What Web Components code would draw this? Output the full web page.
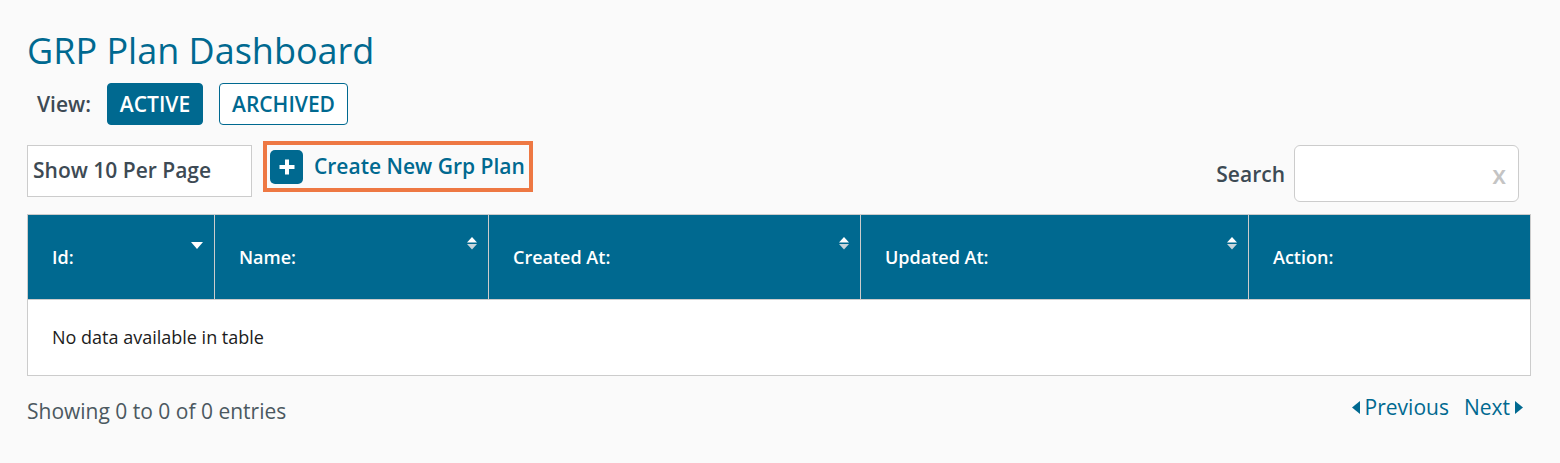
<!DOCTYPE html>
<html><head><meta charset="utf-8"><title>GRP Plan Dashboard</title>
<style>
html,body{margin:0;padding:0;background:#fafafa;}
body{font-family:"Open Sans",sans-serif;color:#3d4a54;}
</style></head><body>
<grp-dashboard>
  <span slot="title">GRP Plan Dashboard</span>
</grp-dashboard>
<script>
function def(name, html){
  customElements.define(name, class extends HTMLElement{
    constructor(){super();this.attachShadow({mode:'open'}).innerHTML=html;}
  });
}
def('view-switch',`<style>
:host{display:flex;align-items:center;height:42px;margin-top:0;padding-left:10px;font-size:21px;font-weight:600;color:#3d4a54}
.l{width:70px}
.b{box-sizing:border-box;height:42px;display:flex;align-items:center;justify-content:center;border:1px solid #006990;border-radius:4px;color:#006990;background:#fff;font-size:21px;font-weight:600}
.a{width:96px;background:#006990;color:#fff}
.r{width:129px;margin-left:16px}
</style><span class="l">View:</span><span class="b a">ACTIVE</span><span class="b r">ARCHIVED</span>`);
def('length-select',`<style>
:host{box-sizing:border-box;display:flex;align-items:center;width:225px;height:52px;background:#fff;border:1px solid #ccc;padding-left:5px;font-size:21px;font-weight:600;color:#3d4a54}
span{position:relative;top:-1px}
</style><span><slot></slot></span>`);
def('create-button',`<style>
:host{box-sizing:border-box;display:flex;align-items:center;width:270px;height:51px;border:4px solid #ee7843;margin-left:11px;margin-top:-4px;padding-left:3px;font-size:21px;font-weight:600;color:#006990;white-space:nowrap}
.i{width:33px;height:34px;border-radius:5px;background:#006990;display:flex;align-items:center;justify-content:center;margin-right:11px;flex:none}
span.t{position:relative;top:-1px}
</style><span class="i"><svg width="16" height="16" viewBox="0 0 16 16"><path d="M6 0.5h4v5.500h5.500v4h-5.500v5.500h-4v-5.500h-5.500v-4h5.500z" fill="#fff"/></svg></span><span class="t"><slot></slot></span>`);
def('search-box',`<style>
:host{display:flex;align-items:center;margin-left:auto;margin-right:12px;font-size:21px;font-weight:600;color:#3d4a54}
.f{box-sizing:border-box;width:225px;height:57px;margin-left:9px;background:#fff;border:1px solid #ccc;border-radius:6px;display:flex;align-items:center;justify-content:flex-end;padding-right:12px;color:#c4c4c4;font-size:25px;font-weight:600}
</style><slot></slot><span class="f">x</span>`);
def('sort-icon',`<style>
:host{display:block;position:absolute;right:11px;top:22px;width:10px;height:13px}
svg{display:block}
</style><svg width="10" height="13" viewBox="0 0 10 13"><path d="M5 0L10 5.500H0z" fill="#fff"/><path d="M5 12.500L0 7H10z" fill="#c8d4da"/></svg>`);
def('sort-down',`<style>
:host{display:block;position:absolute;right:11px;top:27px;width:12px;height:7px}
svg{display:block}
</style><svg width="12" height="7" viewBox="0 0 12 7"><path d="M0 0H12L6 7z" fill="#fff"/></svg>`);
def('data-table',`<style>
:host{display:block;box-sizing:border-box;margin-top:12px;width:1504px;border:1px solid #ccc;background:#fff}
.h{display:grid;grid-template-columns:186px 274px 372px 388px 1fr;height:84px;background:#006990;color:#fff;font-size:18px;font-weight:600;border-bottom:1px solid #ccc;box-sizing:content-box}
.c{position:relative;display:flex;align-items:center;padding-left:24px;border-left:1px solid #ccc;box-sizing:border-box}
.c:first-child{border-left:0}
.c+.c{padding-left:24px}
.e{height:75px;display:flex;align-items:center;padding-left:24px;font-size:18px;color:#1c1c1c}
span.x{position:relative;top:-1px}
</style><div class="h">
<div class="c">Id:<sort-down></sort-down></div>
<div class="c">Name:<sort-icon></sort-icon></div>
<div class="c">Created At:<sort-icon></sort-icon></div>
<div class="c">Updated At:<sort-icon></sort-icon></div>
<div class="c">Action:</div>
</div><div class="e"><span class="x">No data available in table</span></div>`);
def('page-footer',`<style>
:host{display:flex;justify-content:space-between;width:1504px;margin-top:21px;font-size:21px;color:#4b5860}
.p{display:flex;align-items:center;color:#006990;font-size:21px;height:26px;margin-top:-3px;margin-right:8px}
.p svg{display:block}
.n{margin-left:15px}
.g1{margin-right:5px}.g2{margin-left:5px}
</style><span>Showing 0 to 0 of 0 entries</span><span class="p">
<svg class="g1" width="8" height="13" viewBox="0 0 8 13"><path d="M8 0V13L0 6.500z" fill="#006990"/></svg>Previous<span class="n">Next</span>
<svg class="g2" width="8" height="13" viewBox="0 0 8 13"><path d="M0 0V13L8 6.500z" fill="#006990"/></svg></span>`);
def('grp-dashboard',`<style>
:host{display:block;padding:26px 0 0 27px;height:437px;box-sizing:content-box}
h1{margin:0 0 8px;font-size:36px;font-weight:400;line-height:49px;color:#006990}
.tools{display:flex;align-items:flex-start;margin-top:20px;width:1504px;height:57px}
</style><h1><slot name="title"></slot></h1>
<view-switch></view-switch>
<div class="tools"><length-select>Show 10 Per Page</length-select><create-button>Create New Grp Plan</create-button><search-box>Search</search-box></div>
<data-table></data-table>
<page-footer></page-footer>`);
</script>
</body></html>
